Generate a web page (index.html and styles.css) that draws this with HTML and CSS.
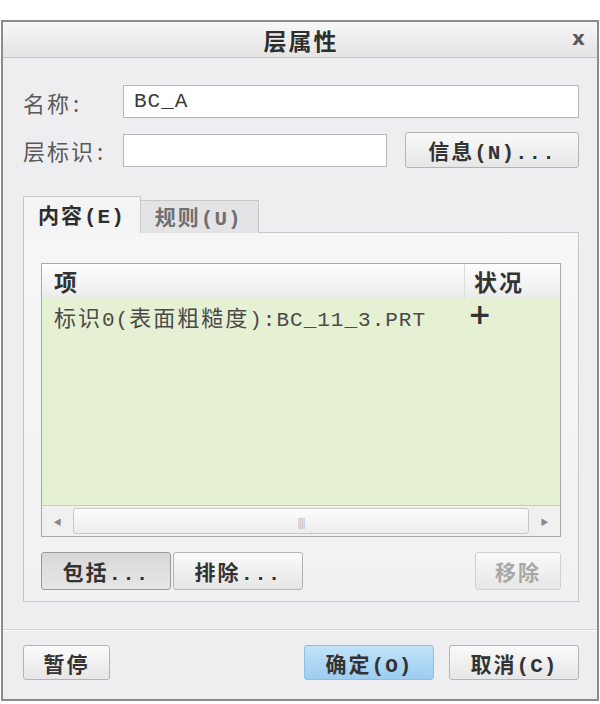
FILE: index.html
```html
<!DOCTYPE html>
<html lang="zh-CN">
<head>
  <meta charset="UTF-8" />
  <title>层属性</title>
  <link rel="stylesheet" href="styles.css">
</head>
<body>

  <div class="dialog">

    <!-- タイトルバー -->
    <div class="titlebar">
      <span class="title">层属性</span>
      <span class="close">x</span>
    </div>

    <div class="content">

      <div class="row">
        <label class="label">名称<span class="colon">:</span></label>
        <div class="field wide">BC_A</div>
      </div>

      <div class="row">
        <label class="label">层标识<span class="colon">:</span></label>
        <div class="field short"></div>
        <button class="btn info">信息<span class="mono">(N)...</span></button>
      </div>

      <!-- タブ -->
      <div class="tabs">
        <div class="tab active">内容<span class="mono">(E)</span></div>
        <div class="tab">规则<span class="mono">(U)</span></div>
      </div>

      <div class="panel">
        <div class="list">
          <div class="list_head">
            <div class="col_item">项</div>
            <div class="col_state">状况</div>
          </div>
          <div class="list_body">
            <div class="list_row">
              <div class="col_item">标识<span class="mono">0(</span>表面粗糙度<span class="mono">):BC_11_3.PRT</span></div>
              <div class="col_state plus">+</div>
            </div>
          </div>
          <div class="hscroll">
            <div class="arrow">&#9664;</div>
            <div class="thumb">||||</div>
            <div class="arrow">&#9654;</div>
          </div>
        </div>

        <div class="list_buttons">
          <button class="btn pressed w130">包括<span class="mono">...</span></button>
          <button class="btn w130">排除<span class="mono">...</span></button>
          <button class="btn disabled push_right">移除</button>
        </div>
      </div>
    </div>

    <div class="footer">
      <button class="btn pause">暂停</button>
      <button class="btn primary push_right w130">确定<span class="mono">(O)</span></button>
      <button class="btn w130">取消<span class="mono">(C)</span></button>
    </div>

  </div>

</body>
</html>
```

FILE: styles.css
```css
body {
  margin: 0;
  padding: 0;
  background: #fff;
  font-family: "Noto Sans CJK SC", sans-serif;
}

.mono {
  font-family: "Liberation Mono", "Noto Sans CJK SC", monospace;
  font-size: 21px;
  letter-spacing: 1px;
}

/* ========================== */
/* ダイアログ本体 */
/* ========================== */

.dialog {
  margin: 20px 0 0 1px;
  width: 594px;
  height: 677px;
  border: 2px solid #8c8c8c;
  background: #eeeef0;
  display: flex;
  flex-direction: column;
}

.titlebar {
  position: relative;
  height: 35px;
  display: flex;
  justify-content: center;
  align-items: center;
  background: linear-gradient(#f7f7f7, #e4e4e4);
  border-bottom: 1px solid #c3c3c3;
}

.title {
  font-size: 23px;
  font-weight: bold;
  letter-spacing: 2px;
  color: #2e2e2e;
  margin-left: 2px;
}

.close {
  position: absolute;
  right: 12px;
  top: 4px;
  font-family: "DejaVu Sans", sans-serif;
  font-weight: bold;
  font-size: 20px;
  color: #5a5a5a;
}

.content {
  padding: 27px 18px 0 20px;
}

.row {
  display: flex;
  align-items: center;
  margin-bottom: 14px;
}

.label {
  width: 100px;
  font-size: 22px;
  letter-spacing: 2px;
  color: #5a5a5a;
}

.colon {
  margin-left: 2px;
}

.field {
  height: 33px;
  box-sizing: border-box;
  border: 1px solid #b8b8b8;
  background: #fff;
  font-family: "Liberation Mono", monospace;
  font-size: 21px;
  letter-spacing: 1px;
  color: #3a3a3a;
  padding: 0 10px;
  line-height: 31px;
}

.field.wide {
  flex: 1;
}

.field.short {
  width: 264px;
}

/* ========================== */
/* ボタン */
/* ========================== */

.btn {
  height: 36px;
  box-sizing: border-box;
  border: 1px solid #b4b4b4;
  border-radius: 3px;
  background: linear-gradient(#fafafa, #e6e6e6);
  font-family: "Noto Sans CJK SC", sans-serif;
  font-size: 21px;
  font-weight: bold;
  color: #333;
  padding: 0 10px;
  letter-spacing: 2px;
  white-space: nowrap;
}

.btn .mono {
  font-weight: bold;
}

.btn.info {
  margin-left: 18px;
  flex: 1;
}

.w130 {
  width: 130px;
}

.btn.pause {
  width: 87px;
}

.btn.pressed {
  background: linear-gradient(#d8d8d8, #e6e6e6);
  border-color: #9a9a9a;
}

.btn.disabled {
  width: 86px;
  color: #a8a8a8;
  border-color: #d0d0d0;
}

.btn.primary {
  background: linear-gradient(#c2e2f8, #9ccdf0);
  border-color: #8fbfe0;
}

.push_right {
  margin-left: auto;
}

.list_buttons .btn {
  height: 38px;
}

.footer .btn {
  height: 35px;
}

/* ========================== */
/* タブ */
/* ========================== */

.tabs {
  display: flex;
  align-items: flex-end;
  margin-top: 28px;
  height: 37px;
}

.tab {
  font-size: 21px;
  font-weight: bold;
  letter-spacing: 2px;
  color: #2e2e2e;
  padding: 0 15px 0 14px;
  height: 37px;
  line-height: 34px;
  box-sizing: border-box;
  border: 1px solid #c8c8c8;
  border-bottom: none;
  background: #f4f4f5;
}

.tab .mono {
  font-weight: bold;
}

.tab:not(.active) {
  height: 33px;
  line-height: 31px;
  background: #e4e4e6;
  color: #707070;
  border-left: none;
  padding: 0 16px 0 14px;
}

.panel {
  margin-top: -1px;
  height: 370px;
  box-sizing: border-box;
  border: 1px solid #c8c8c8;
  background: linear-gradient(#f6f6f7, #f1f1f2);
  padding: 30px 17px 0 17px;
}

/* ========================== */
/* リスト */
/* ========================== */

.list {
  height: 274px;
  box-sizing: border-box;
  border: 1px solid #a8a8a8;
  display: flex;
  flex-direction: column;
}

.list_head {
  display: flex;
  height: 34px;
  background: linear-gradient(#fdfdfd, #ececec);
  font-weight: bold;
  font-size: 23px;
  letter-spacing: 2px;
  color: #333;
  line-height: 34px;
}

.list_head .col_state {
  border-left: 1px solid #dcdcdc;
  padding-left: 9px;
}

.list_row {
  display: flex;
}

.col_item {
  flex: 1;
  padding-left: 12px;
}

.col_state {
  width: 96px;
  box-sizing: border-box;
}

.list_body {
  flex: 1;
  background: #e6f0d3;
  font-size: 22px;
  letter-spacing: 2px;
  color: #4a4a4a;
  line-height: 36px;
}

.plus {
  font-family: "DejaVu Sans", sans-serif;
  font-weight: bold;
  font-size: 28px;
  line-height: 34px;
  padding-left: 4px;
  color: #333;
}

.hscroll {
  height: 31px;
  display: flex;
  background: #f0f0f0;
  border-top: 1px solid #c8c8c8;
  padding: 2px 0;
  box-sizing: border-box;
}

.arrow {
  width: 31px;
  font-size: 8px;
  color: #888;
  display: flex;
  justify-content: center;
  align-items: center;
}

.thumb {
  flex: 1;
  border: 1px solid #c8c8c8;
  border-radius: 3px;
  background: linear-gradient(#fdfdfd, #ececec);
  color: #aaa;
  font-size: 10px;
  display: flex;
  justify-content: center;
  align-items: center;
  letter-spacing: -1px;
}

.list_buttons {
  display: flex;
  margin-top: 15px;
  gap: 2px;
}

/* ========================== */
/* フッター */
/* ========================== */

.footer {
  margin-top: 27px;
  border-top: 1px solid #d2d2d2;
  box-shadow: inset 0 1px 0 #fafafa;
  display: flex;
  gap: 15px;
  padding: 15px 18px 0 20px;
}
```
